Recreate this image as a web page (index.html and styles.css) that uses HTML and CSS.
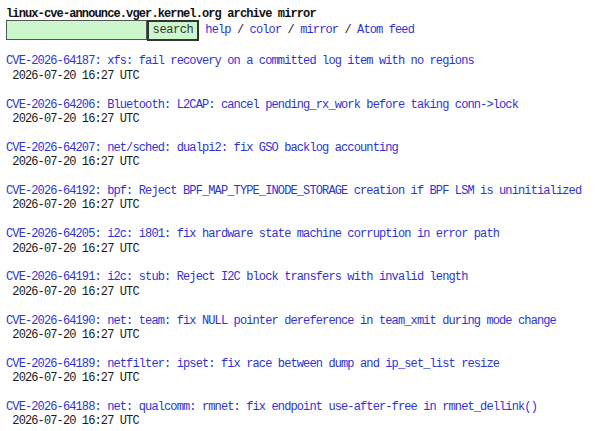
FILE: index.html
```html
<!DOCTYPE html>
<html lang="en">
<head>
  <meta charset="UTF-8" />
  <title>linux-cve-announce.vger.kernel.org archive mirror</title>
  <link rel="stylesheet" href="styles.css">
</head>
<body>

  <form class="header" action="./">
    <div class="title"><a href="./">linux-cve-announce.vger.kernel.org archive mirror</a></div>
    <div class="search-row">
      <input type="text" name="q" class="q" />
      <input type="submit" value="search" class="go" />
      <span class="nav"> <a href="_/text/help/">help</a> / <a href="_/text/color/">color</a> / <a href="_/text/mirror/">mirror</a> / <a href="new.atom">Atom feed</a></span>
    </div>
  </form>

  <div class="entries">
    <div class="entry"><a href="#">CVE-2026-64187: xfs: fail recovery on a committed log item with no regions</a><div class="date"> 2026-07-20 16:27 UTC</div></div>
    <div class="entry"><a href="#">CVE-2026-64206: Bluetooth: L2CAP: cancel pending_rx_work before taking conn-&gt;lock</a><div class="date"> 2026-07-20 16:27 UTC</div></div>
    <div class="entry"><a href="#">CVE-2026-64207: net/sched: dualpi2: fix GSO backlog accounting</a><div class="date"> 2026-07-20 16:27 UTC</div></div>
    <div class="entry"><a href="#">CVE-2026-64192: bpf: Reject BPF_MAP_TYPE_INODE_STORAGE creation if BPF LSM is uninitialized</a><div class="date"> 2026-07-20 16:27 UTC</div></div>
    <div class="entry"><a href="#">CVE-2026-64205: i2c: i801: fix hardware state machine corruption in error path</a><div class="date"> 2026-07-20 16:27 UTC</div></div>
    <div class="entry"><a href="#">CVE-2026-64191: i2c: stub: Reject I2C block transfers with invalid length</a><div class="date"> 2026-07-20 16:27 UTC</div></div>
    <div class="entry"><a href="#">CVE-2026-64190: net: team: fix NULL pointer dereference in team_xmit during mode change</a><div class="date"> 2026-07-20 16:27 UTC</div></div>
    <div class="entry"><a href="#">CVE-2026-64189: netfilter: ipset: fix race between dump and ip_set_list resize</a><div class="date"> 2026-07-20 16:27 UTC</div></div>
    <div class="entry"><a href="#">CVE-2026-64188: net: qualcomm: rmnet: fix endpoint use-after-free in rmnet_dellink()</a><div class="date"> 2026-07-20 16:27 UTC</div></div>
  </div>

</body>
</html>
```

FILE: styles.css
```css
body {
  margin: 0;
  padding: 0;
  background: #fff;
  color: #1a1a1a;
  font-family: 'Liberation Mono', monospace;
  font-size: 12px;
  letter-spacing: -0.88px;
  line-height: 14.4px;
}
a {
  color: #2e34d4;
  text-decoration: none;
}
.header {
  margin: 0;
  padding: 6px 0 0 6px;
}
.title {
  padding-top: 1px;
  height: 13.4px;
}
.title a {
  color: #111;
  font-weight: bold;
}
.search-row {
  display: flex;
  align-items: center;
  height: 20px;
}
.q {
  box-sizing: border-box;
  width: 141px;
  height: 20px;
  margin: 0;
  padding: 0 3px;
  background: #ccf7cc;
  border: 1px solid #555;
  font: inherit;
}
.go {
  box-sizing: border-box;
  width: 52px;
  height: 21px;
  margin: 0;
  padding: 0;
  background: #ccf7cc;
  border: 2px solid #333;
  color: #333;
  font: inherit;
  letter-spacing: -0.4px;
  cursor: pointer;
}
.nav {
  white-space: pre;
}
.entries {
  margin-top: 14px;
  padding-left: 6px;
}
.entry {
  white-space: nowrap;
  padding-bottom: 14.4px;
}
.date {
  white-space: pre;
  color: #1a1a1a;
}
```
